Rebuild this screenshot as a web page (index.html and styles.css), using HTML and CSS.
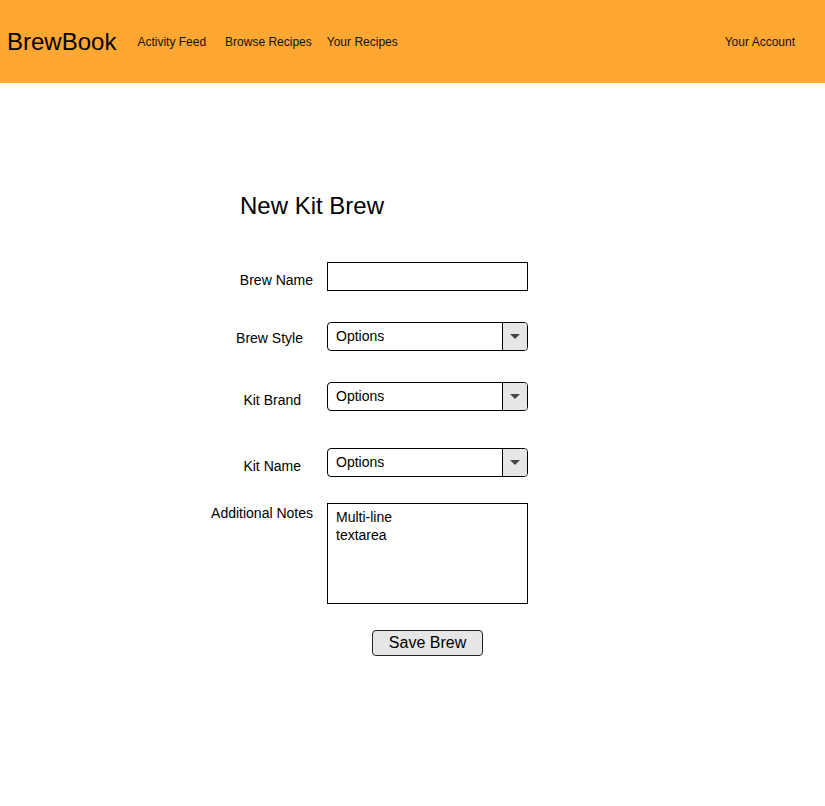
FILE: index.html
```html
<!DOCTYPE html>
<html lang="en">
<head>
<meta charset="utf-8">
<title>BrewBook - New Kit Brew</title>
<link rel="stylesheet" href="styles.css">
</head>
<body>
<header class="topbar">
  <a class="brand" href="#">BrewBook</a>
  <nav class="nav">
    <a class="nav-link nav-link--feed" href="#">Activity Feed</a>
    <a class="nav-link nav-link--browse" href="#">Browse Recipes</a>
    <a class="nav-link nav-link--yours" href="#">Your Recipes</a>
  </nav>
  <a class="nav-link nav-link--account" href="#">Your Account</a>
</header>

<main class="page">
  <h1 class="page-title">New Kit Brew</h1>
  <form class="brew-form">
    <div class="form-row form-row--name">
      <label class="form-label form-label--name">Brew Name</label>
      <div class="text-input"></div>
    </div>
    <div class="form-row form-row--style">
      <label class="form-label form-label--style">Brew Style</label>
      <div class="select">
        <span class="select-value">Options</span>
        <span class="select-arrow"><span class="caret"></span></span>
      </div>
    </div>
    <div class="form-row form-row--brand">
      <label class="form-label form-label--brand">Kit Brand</label>
      <div class="select">
        <span class="select-value">Options</span>
        <span class="select-arrow"><span class="caret"></span></span>
      </div>
    </div>
    <div class="form-row form-row--kit">
      <label class="form-label form-label--kit">Kit Name</label>
      <div class="select">
        <span class="select-value">Options</span>
        <span class="select-arrow"><span class="caret"></span></span>
      </div>
    </div>
    <div class="form-row form-row--notes">
      <label class="form-label form-label--notes">Additional Notes</label>
      <div class="textarea">Multi-line<br>textarea</div>
    </div>
    <div class="form-row form-row--actions">
      <span class="form-spacer"></span>
      <div class="actions">
        <button type="button" class="btn">Save Brew</button>
      </div>
    </div>
  </form>
</main>
</body>
</html>
```

FILE: styles.css
```css
* {
  box-sizing: border-box;
}

body {
  margin: 0;
  background: #ffffff;
  color: #000000;
  font-family: "Liberation Sans", Arial, sans-serif;
}

a {
  color: inherit;
  text-decoration: none;
}

/* Header */
.topbar {
  display: flex;
  align-items: center;
  height: 83px;
  padding: 0 30px 0 7px;
  background: #ffa733;
}

.brand {
  font-size: 24px;
  line-height: 28px;
  color: #000;
}

.nav {
  display: flex;
  align-items: center;
}

.nav-link {
  font-size: 12px;
  line-height: 16px;
  color: #111;
}

.nav-link--feed {
  margin-left: 21px;
}

.nav-link--browse {
  margin-left: 19px;
}

.nav-link--yours {
  margin-left: 15px;
}

.nav-link--account {
  margin-left: auto;
}

/* Page */
.page {
  padding: 109px 0 0 200px;
}

.page-title {
  margin: 0 0 42px 40px;
  font-size: 24px;
  line-height: 28px;
  font-weight: normal;
}

.brew-form {
  display: flex;
  flex-direction: column;
}

.form-row {
  display: flex;
  align-items: flex-start;
}

.form-row--style,
.form-row--brand {
  margin-top: 31px;
}

.form-row--kit {
  margin-top: 37px;
}

.form-row--notes {
  margin-top: 26px;
}

.form-row--actions {
  margin-top: 26px;
}

.form-label,
.form-spacer {
  flex: 0 0 127px;
  text-align: right;
  font-size: 14px;
  line-height: 16px;
}

.form-label--name {
  padding: 10px 14px 0 0;
}

.form-label--style {
  padding: 8px 24px 0 0;
}

.form-label--brand {
  padding: 10px 26px 0 0;
}

.form-label--kit {
  padding: 10px 26px 0 0;
}

.form-label--notes {
  padding: 2px 14px 0 0;
}

/* Controls */
.text-input {
  width: 201px;
  height: 29px;
  border: 1px solid #000;
  background: #fff;
}

.select {
  display: flex;
  width: 201px;
  height: 29px;
  border: 1px solid #000;
  border-radius: 4px;
  overflow: hidden;
  background: #fff;
}

.select-value {
  flex: 1;
  padding-left: 8px;
  font-size: 14px;
  line-height: 26px;
}

.select-arrow {
  display: flex;
  align-items: center;
  justify-content: center;
  width: 25px;
  border-left: 1px solid #000;
  background: #e6e6e6;
}

.caret {
  width: 0;
  height: 0;
  border-left: 5px solid transparent;
  border-right: 5px solid transparent;
  border-top: 5px solid #444;
}

.textarea {
  width: 201px;
  height: 101px;
  padding: 4px 8px;
  border: 1px solid #000;
  background: #fff;
  font-size: 14px;
  line-height: 18px;
}

.actions {
  display: flex;
  justify-content: center;
  width: 201px;
}

.btn {
  width: 111px;
  height: 26px;
  padding: 0;
  border: 1px solid #222;
  border-radius: 4px;
  background: #e6e6e6;
  color: #000;
  font-family: "Liberation Sans", Arial, sans-serif;
  font-size: 16px;
  line-height: 22px;
}
```
